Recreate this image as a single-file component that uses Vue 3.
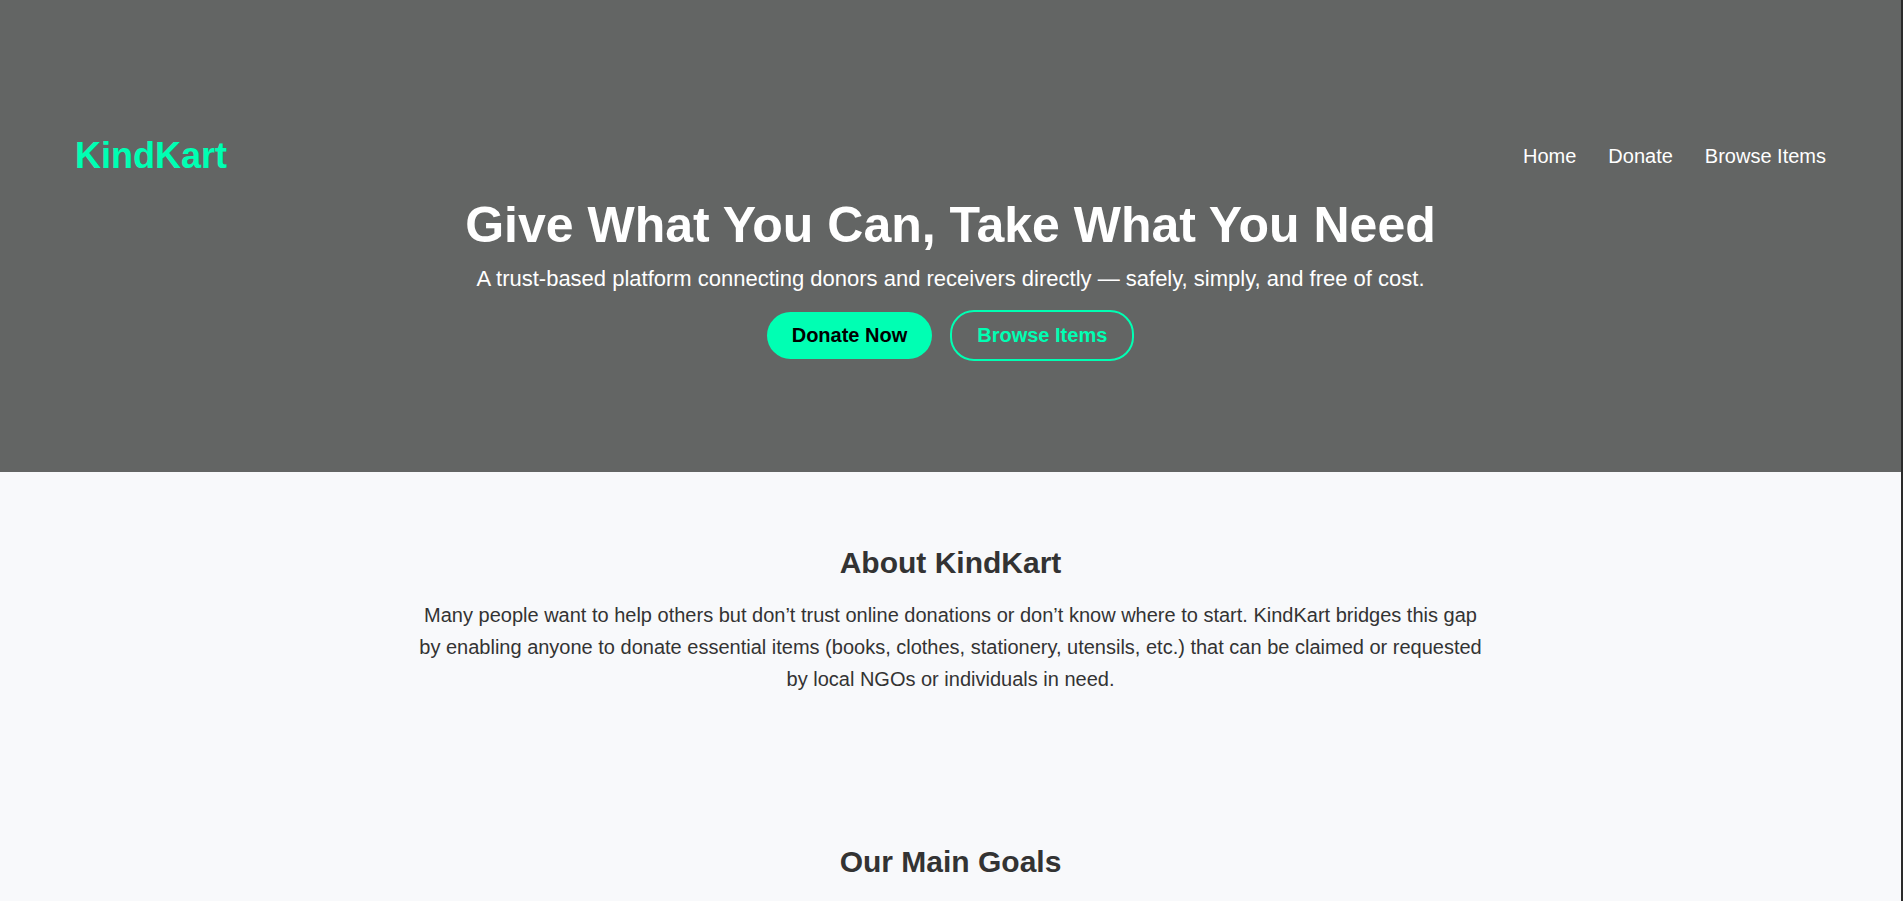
<script setup>
const links = ['Home', 'Donate', 'Browse Items']
</script>

<template>
  <div class="page">
    <header class="hero">
      <nav class="navbar">
        <div class="logo">KindKart</div>
        <ul class="nav-links">
          <li v-for="link in links" :key="link"><a href="#">{{ link }}</a></li>
        </ul>
      </nav>
      <div class="hero-content">
        <h1>Give What You Can, Take What You Need</h1>
        <p>A trust-based platform connecting donors and receivers directly — safely, simply, and free of cost.</p>
        <div class="hero-buttons">
          <button class="btn primary">Donate Now</button>
          <button class="btn outline">Browse Items</button>
        </div>
      </div>
    </header>

    <section class="about">
      <h2>About KindKart</h2>
      <p>Many people want to help others but don’t trust online donations or don’t know where to start. KindKart bridges this gap by enabling anyone to donate essential items (books, clothes, stationery, utensils, etc.) that can be claimed or requested by local NGOs or individuals in need.</p>
    </section>

    <section class="goals">
      <h2>Our Main Goals</h2>
    </section>
  </div>
</template>

<style>
html, body {
  margin: 0;
  background: #f8f9fb;
}
</style>

<style scoped>
.page {
  font-family: "Liberation Sans", Arial, sans-serif;
  color: #333;
  height: 901px;
  overflow: hidden;
  box-sizing: border-box;
  border-right: 2px solid #2b2b2b;
}

.hero {
  background: #636564;
  height: 472px;
  box-sizing: border-box;
  padding-top: 132px;
  color: #fff;
}

.navbar {
  display: flex;
  justify-content: space-between;
  align-items: center;
  padding: 0 75px;
  height: 48px;
}

.logo {
  font-size: 36px;
  font-weight: 700;
  color: #00ffb3;
}

.nav-links {
  display: flex;
  gap: 32px;
  list-style: none;
  margin: 0;
  padding: 0;
}

.nav-links a {
  color: #fff;
  text-decoration: none;
  font-size: 20px;
}

.hero-content {
  text-align: center;
}

.hero-content h1 {
  font-size: 50px;
  line-height: 59px;
  margin: 16px 0 0;
}

.hero-content p {
  font-size: 22px;
  line-height: 25px;
  margin: 11px 0 0;
}

.hero-buttons {
  display: flex;
  justify-content: center;
  gap: 18px;
  margin-top: 21px;
}

.btn {
  font-family: inherit;
  font-size: 20px;
  font-weight: 700;
  border-radius: 24px;
  height: 47px;
  padding: 0 25px;
  cursor: pointer;
}

.primary {
  background: #00ffb3;
  color: #000;
  border: none;
}

.outline {
  background: transparent;
  color: #00ffb3;
  border: 2px solid #00ffb3;
  height: 51px;
  margin-top: -2px;
}

.about, .goals {
  text-align: center;
}

.about {
  padding-top: 73px;
}

.about h2, .goals h2 {
  font-size: 30px;
  line-height: 35px;
  margin: 0;
}

.about p {
  width: 1070px;
  margin: 19px auto 0;
  font-size: 20px;
  line-height: 32px;
}

.goals {
  padding-top: 149px;
}
</style>
